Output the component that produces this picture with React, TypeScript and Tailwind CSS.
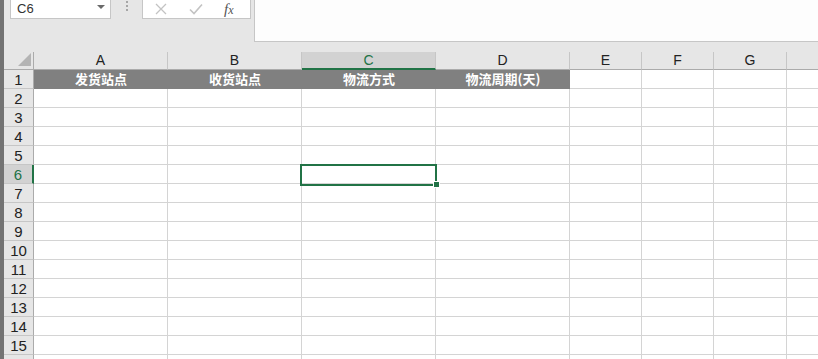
const cols = [
  { key: "A", w: "w-[134px]" },
  { key: "B", w: "w-[134px]" },
  { key: "C", w: "w-[134px]" },
  { key: "D", w: "w-[134px]" },
  { key: "E", w: "w-[72px]" },
  { key: "F", w: "w-[72px]" },
  { key: "G", w: "w-[73px]" },
  { key: "", w: "w-[60px]" },
];

const heads = ["发货站点", "收货站点", "物流方式", "物流周期(天)"];
const rows = Array.from({ length: 15 }, (_, i) => i + 2);

function TopBar() {
  return (
    <div className="flex h-[52px] shrink-0">
      <div className="ml-[6px] flex h-[19px] w-[101px] items-center justify-between border-x border-b border-[#c6c6c6] bg-white pl-[6px] pr-[5px]">
        <span className="text-[13px] text-[#333]">C6</span>
        <span className="mb-[4px] h-0 w-0 border-x-[4px] border-t-[4px] border-x-transparent border-t-[#6a6a6a]" />
      </div>
      <div className="flex w-[31px] flex-col items-center gap-[2px] pt-[1px]">
        <span className="h-[2px] w-[2px] bg-[#a6a6a6]" />
        <span className="h-[2px] w-[2px] bg-[#a6a6a6]" />
        <span className="h-[2px] w-[2px] bg-[#a6a6a6]" />
      </div>
      <div className="flex h-[19px] w-[109px] items-center border-x border-b border-[#c6c6c6] bg-white">
        <svg width="12" height="12" viewBox="0 0 12 12" className="ml-[12px]">
          <path d="M1 1L11 11M11 1L1 11" stroke="#c3c3c3" strokeWidth="1.3" fill="none" />
        </svg>
        <svg width="14" height="12" viewBox="0 0 14 12" className="ml-[22px]">
          <path d="M1 6.5L5 10.5L13 1.5" stroke="#c3c3c3" strokeWidth="1.6" fill="none" />
        </svg>
        <span className="ml-[21px] font-['Liberation_Serif',serif] text-[15px] italic text-[#555] leading-none">
          f<span className="text-[12px]">x</span>
        </span>
      </div>
      <div className="ml-[3px] h-[42px] flex-1 border-l border-b border-[#c6c6c6] bg-[#fdfdfd]" />
    </div>
  );
}

function Grid() {
  return (
    <div className="relative flex-1 overflow-hidden bg-white">
      <div className="flex h-[18px] bg-[#e6e6e6]">
        <div className="relative w-[30px] shrink-0 border-r border-b border-[#ababab]">
          <svg width="13" height="13" viewBox="0 0 13 13" className="absolute right-[2px] bottom-[3px]">
            <path d="M13 0L13 13L0 13Z" fill="#b4b4b4" />
          </svg>
        </div>
        {cols.map((c, i) =>
          c.key === "C" ? (
            <div
              key={i}
              className={`${c.w} shrink-0 border-r border-b-2 border-r-[#c6c6c6] border-b-[#217346] bg-[#d2d2d2] text-center text-[14px] leading-[17px] text-[#217346]`}
            >
              {c.key}
            </div>
          ) : (
            <div
              key={i}
              className={`${c.w} shrink-0 border-r border-b border-r-[#c6c6c6] border-b-[#ababab] text-center text-[14px] leading-[17px] text-[#222]`}
            >
              {c.key}
            </div>
          )
        )}
      </div>

      <div className="flex h-[19px]">
        <div className="w-[30px] shrink-0 border-r border-b border-r-[#ababab] border-b-[#c6c6c6] bg-[#e6e6e6] text-center text-[15px] leading-[19px] text-[#222]">
          1
        </div>
        {cols.map((c, i) =>
          i < 4 ? (
            <div
              key={i}
              className={`${c.w} shrink-0 bg-[#808080] text-center font-['Noto_Sans_CJK_SC',sans-serif] text-[13px] font-bold leading-[18px] text-white`}
            >
              {heads[i]}
            </div>
          ) : (
            <div key={i} className={`${c.w} shrink-0 border-r border-b border-[#d4d4d4]`} />
          )
        )}
      </div>

      {rows.map((r) => (
        <div key={r} className="flex h-[19px]">
          {r === 6 ? (
            <div className="w-[30px] shrink-0 border-r-2 border-b border-r-[#217346] border-b-[#c6c6c6] bg-[#d2d2d2] text-center text-[15px] leading-[19px] text-[#217346]">
              {r}
            </div>
          ) : (
            <div className="w-[30px] shrink-0 border-r border-b border-r-[#ababab] border-b-[#c6c6c6] bg-[#e6e6e6] text-center text-[15px] leading-[19px] text-[#222]">
              {r < 16 ? r : ""}
            </div>
          )}
          {cols.map((c, i) => (
            <div key={i} className={`${c.w} shrink-0 border-r border-b border-[#d4d4d4]`} />
          ))}
        </div>
      ))}

      <div className="absolute left-[296px] top-[112px] h-[22px] w-[137px] border-2 border-[#217346]" />
      <div className="absolute left-[429px] top-[129px] h-[7px] w-[7px] border border-white bg-[#217346]" />
    </div>
  );
}

export default function App() {
  return (
    <div className="flex h-[359px] w-[818px] overflow-hidden bg-[#e6e6e6] font-['Liberation_Sans','Noto_Sans_CJK_SC',sans-serif]">
      <div className="w-[4px] shrink-0 bg-[#737373]" />
      <div className="flex min-w-0 flex-1 flex-col">
        <TopBar />
        <Grid />
      </div>
    </div>
  );
}
